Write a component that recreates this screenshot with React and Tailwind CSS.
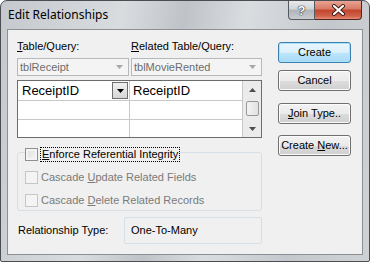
import React from 'react';

const U = ({ children }) => <span className="underline underline-offset-[1px]">{children}</span>;

function Arrow({ dir = 'down', color = '#000' }) {
  return (
    <svg width="7" height="4" viewBox="0 0 7 4">
      <path d={dir === 'down' ? 'M0 0h7L3.5 4z' : 'M0 4h7L3.5 0z'} fill={color} />
    </svg>
  );
}

function Combo({ text, className }) {
  return (
    <div className={`h-[18px] border border-[#b5b9bc] bg-[#f4f4f4] flex items-center pl-[2px] pr-[5px] text-[#6d6d6d] ${className}`}>
      <span className="flex-1">{text}</span>
      <Arrow color="#a8a8a8" />
    </div>
  );
}

function Button({ children, primary }) {
  return (
    <div
      className={`w-[73px] h-[21px] rounded-[3px] border flex items-center justify-center text-black ${
        primary
          ? 'border-[#3c7fb1] shadow-[inset_0_0_0_1px_#a8e3f8] bg-[linear-gradient(#eaf6fd_0%,#d9f0fc_50%,#bee6fd_51%,#a7d9f5_100%)]'
          : 'border-[#707070] shadow-[inset_0_0_0_1px_#fcfcfc] bg-[linear-gradient(#f2f2f2_0%,#ebebeb_50%,#dddddd_51%,#cfcfcf_100%)]'
      }`}
    >
      <span>{children}</span>
    </div>
  );
}

function Check({ children, disabled }) {
  return (
    <div className="flex items-center h-[15px]">
      <div
        className={`w-[13px] h-[13px] border ${
          disabled ? 'border-[#c6c6c6] bg-[#f4f4f4]' : 'border-[#8e8f8f] bg-[linear-gradient(135deg,#dcdcdc,#f7f7f7)] shadow-[inset_0_0_0_2px_#f4f4f4]'
        }`}
      />
      <div className={`ml-[2px] px-[1px] h-[15px] flex items-center ${disabled ? 'text-[#7a7a7a]' : 'border border-dotted border-black text-black'}`}>
        <span>{children}</span>
      </div>
    </div>
  );
}

export default function App() {
  return (
    <div className="w-[370px] h-[262px] relative rounded-t-[7px] rounded-b-[2px] border border-[#4a4e53] bg-[linear-gradient(100deg,#c5c9cd_0%,#d9dcdf_30%,#bfc3c7_45%,#dadde0_60%,#c4c8cc_80%,#cfd2d5_100%)] flex flex-col font-['Liberation_Sans',Arial,sans-serif] text-[11px] leading-[13px] overflow-hidden">
      {/* title bar */}
      <div className="h-[28px] shrink-0 pl-[7px] pt-[6px] font-['Noto_Sans',sans-serif] text-[12px] leading-[16px] text-black">
        Edit Relationships
      </div>
      <div className="absolute top-0 right-[7px] flex">
        <div className="w-[27px] h-[19px] rounded-bl-[4px] border border-t-0 border-[#555a60] bg-[linear-gradient(#e6e8ea_0%,#d2d5d8_45%,#b0b4b8_50%,#c9ccd0_100%)] flex items-center justify-center text-white font-bold text-[13px] [text-shadow:0_0_1px_#222,0_0_1px_#222,0_0_1px_#222]">
          ?
        </div>
        <div className="w-[47px] h-[19px] rounded-br-[4px] border border-t-0 border-l-0 border-[#4f2620] bg-[linear-gradient(#e8a493_0%,#d77a64_45%,#c2432b_50%,#d1644c_85%,#e58f73_100%)] flex items-center justify-center">
          <svg width="15" height="12" viewBox="0 0 15 12">
            <path d="M3 2l9 8M12 2l-9 8" stroke="#3a1a15" strokeWidth="4" strokeLinecap="round" />
            <path d="M3 2l9 8M12 2l-9 8" stroke="#fff" strokeWidth="2.2" strokeLinecap="round" />
          </svg>
        </div>
      </div>

      {/* client */}
      <div className="flex-1 mx-[6px] mb-[6px] border border-[#8b9095] bg-[#f0f0f0] flex text-black">
        {/* left column */}
        <div className="ml-[9px] w-[245px] pt-[10px] flex flex-col">
          <div className="flex">
            <div className="w-[114px]"><U>T</U>able/Query:</div>
            <div><U>R</U>elated Table/Query:</div>
          </div>
          <div className="flex mt-[5px]">
            <Combo text="tblReceipt" className="w-[112px]" />
            <Combo text="tblMovieRented" className="w-[131px] ml-[2px]" />
          </div>

          {/* grid */}
          <div className="mt-[4px] h-[58px] border border-[#6d6d6d] bg-white flex text-[13px] leading-[16px]">
            <div className="w-[112px] border-r border-[#c8c8c8] flex flex-col">
              <div className="h-[20px] border-b border-[#c8c8c8] flex items-center pl-[4px] pr-[1px]">
                <span className="flex-1">ReceiptID</span>
                <div className="w-[16px] h-[17px] border border-[#6e6e6e] bg-[linear-gradient(#f0f0f0,#d6d6d6)] flex items-center justify-center">
                  <Arrow />
                </div>
              </div>
              <div className="h-[19px] border-b border-[#c8c8c8]" />
            </div>
            <div className="w-[113px] border-r border-[#c8c8c8] flex flex-col">
              <div className="h-[20px] border-b border-[#c8c8c8] flex items-center pl-[3px]">ReceiptID</div>
              <div className="h-[19px] border-b border-[#c8c8c8]" />
            </div>
            <div className="flex-1 bg-[#ebebeb] flex flex-col items-center">
              <div className="h-[17px] flex items-center"><Arrow dir="up" color="#4d4d4d" /></div>
              <div className="mt-[3px] w-[13px] h-[15px] rounded-[2px] border border-[#979797] bg-[linear-gradient(90deg,#f3f3f3,#e2e2e2)]" />
              <div className="flex-1" />
              <div className="h-[17px] flex items-center"><Arrow color="#4d4d4d" /></div>
            </div>
          </div>

          {/* group box */}
          <div className="mt-[14px] h-[59px] rounded-[3px] border border-[#d5dfe5] flex flex-col gap-[8px]">
            <div className="-mt-[6px] ml-[7px] w-fit bg-[#f0f0f0]">
              <Check>
                <U>E</U>nforce Referential Integrity
              </Check>
            </div>
            <div className="ml-[7px]">
              <Check disabled>
                Cascade <U>U</U>pdate Related Fields
              </Check>
            </div>
            <div className="ml-[7px]">
              <Check disabled>
                Cascade <U>D</U>elete Related Records
              </Check>
            </div>
          </div>

          {/* relationship type */}
          <div className="mt-[6px] flex items-center">
            <div className="w-[107px] pl-[1px]">Relationship Type:</div>
            <div className="flex-1 h-[27px] rounded-[2px] border border-[#d5dfe5] flex items-center pl-[6px]">
              One-To-Many
            </div>
          </div>
        </div>

        {/* right column */}
        <div className="ml-[16px] pt-[12px] flex flex-col">
          <Button primary>Create</Button>
          <div className="mt-[7px]"><Button>Cancel</Button></div>
          <div className="mt-[12px]"><Button><U>J</U>oin Type..</Button></div>
          <div className="mt-[11px]"><Button>Create <U>N</U>ew...</Button></div>
        </div>
      </div>
    </div>
  );
}
